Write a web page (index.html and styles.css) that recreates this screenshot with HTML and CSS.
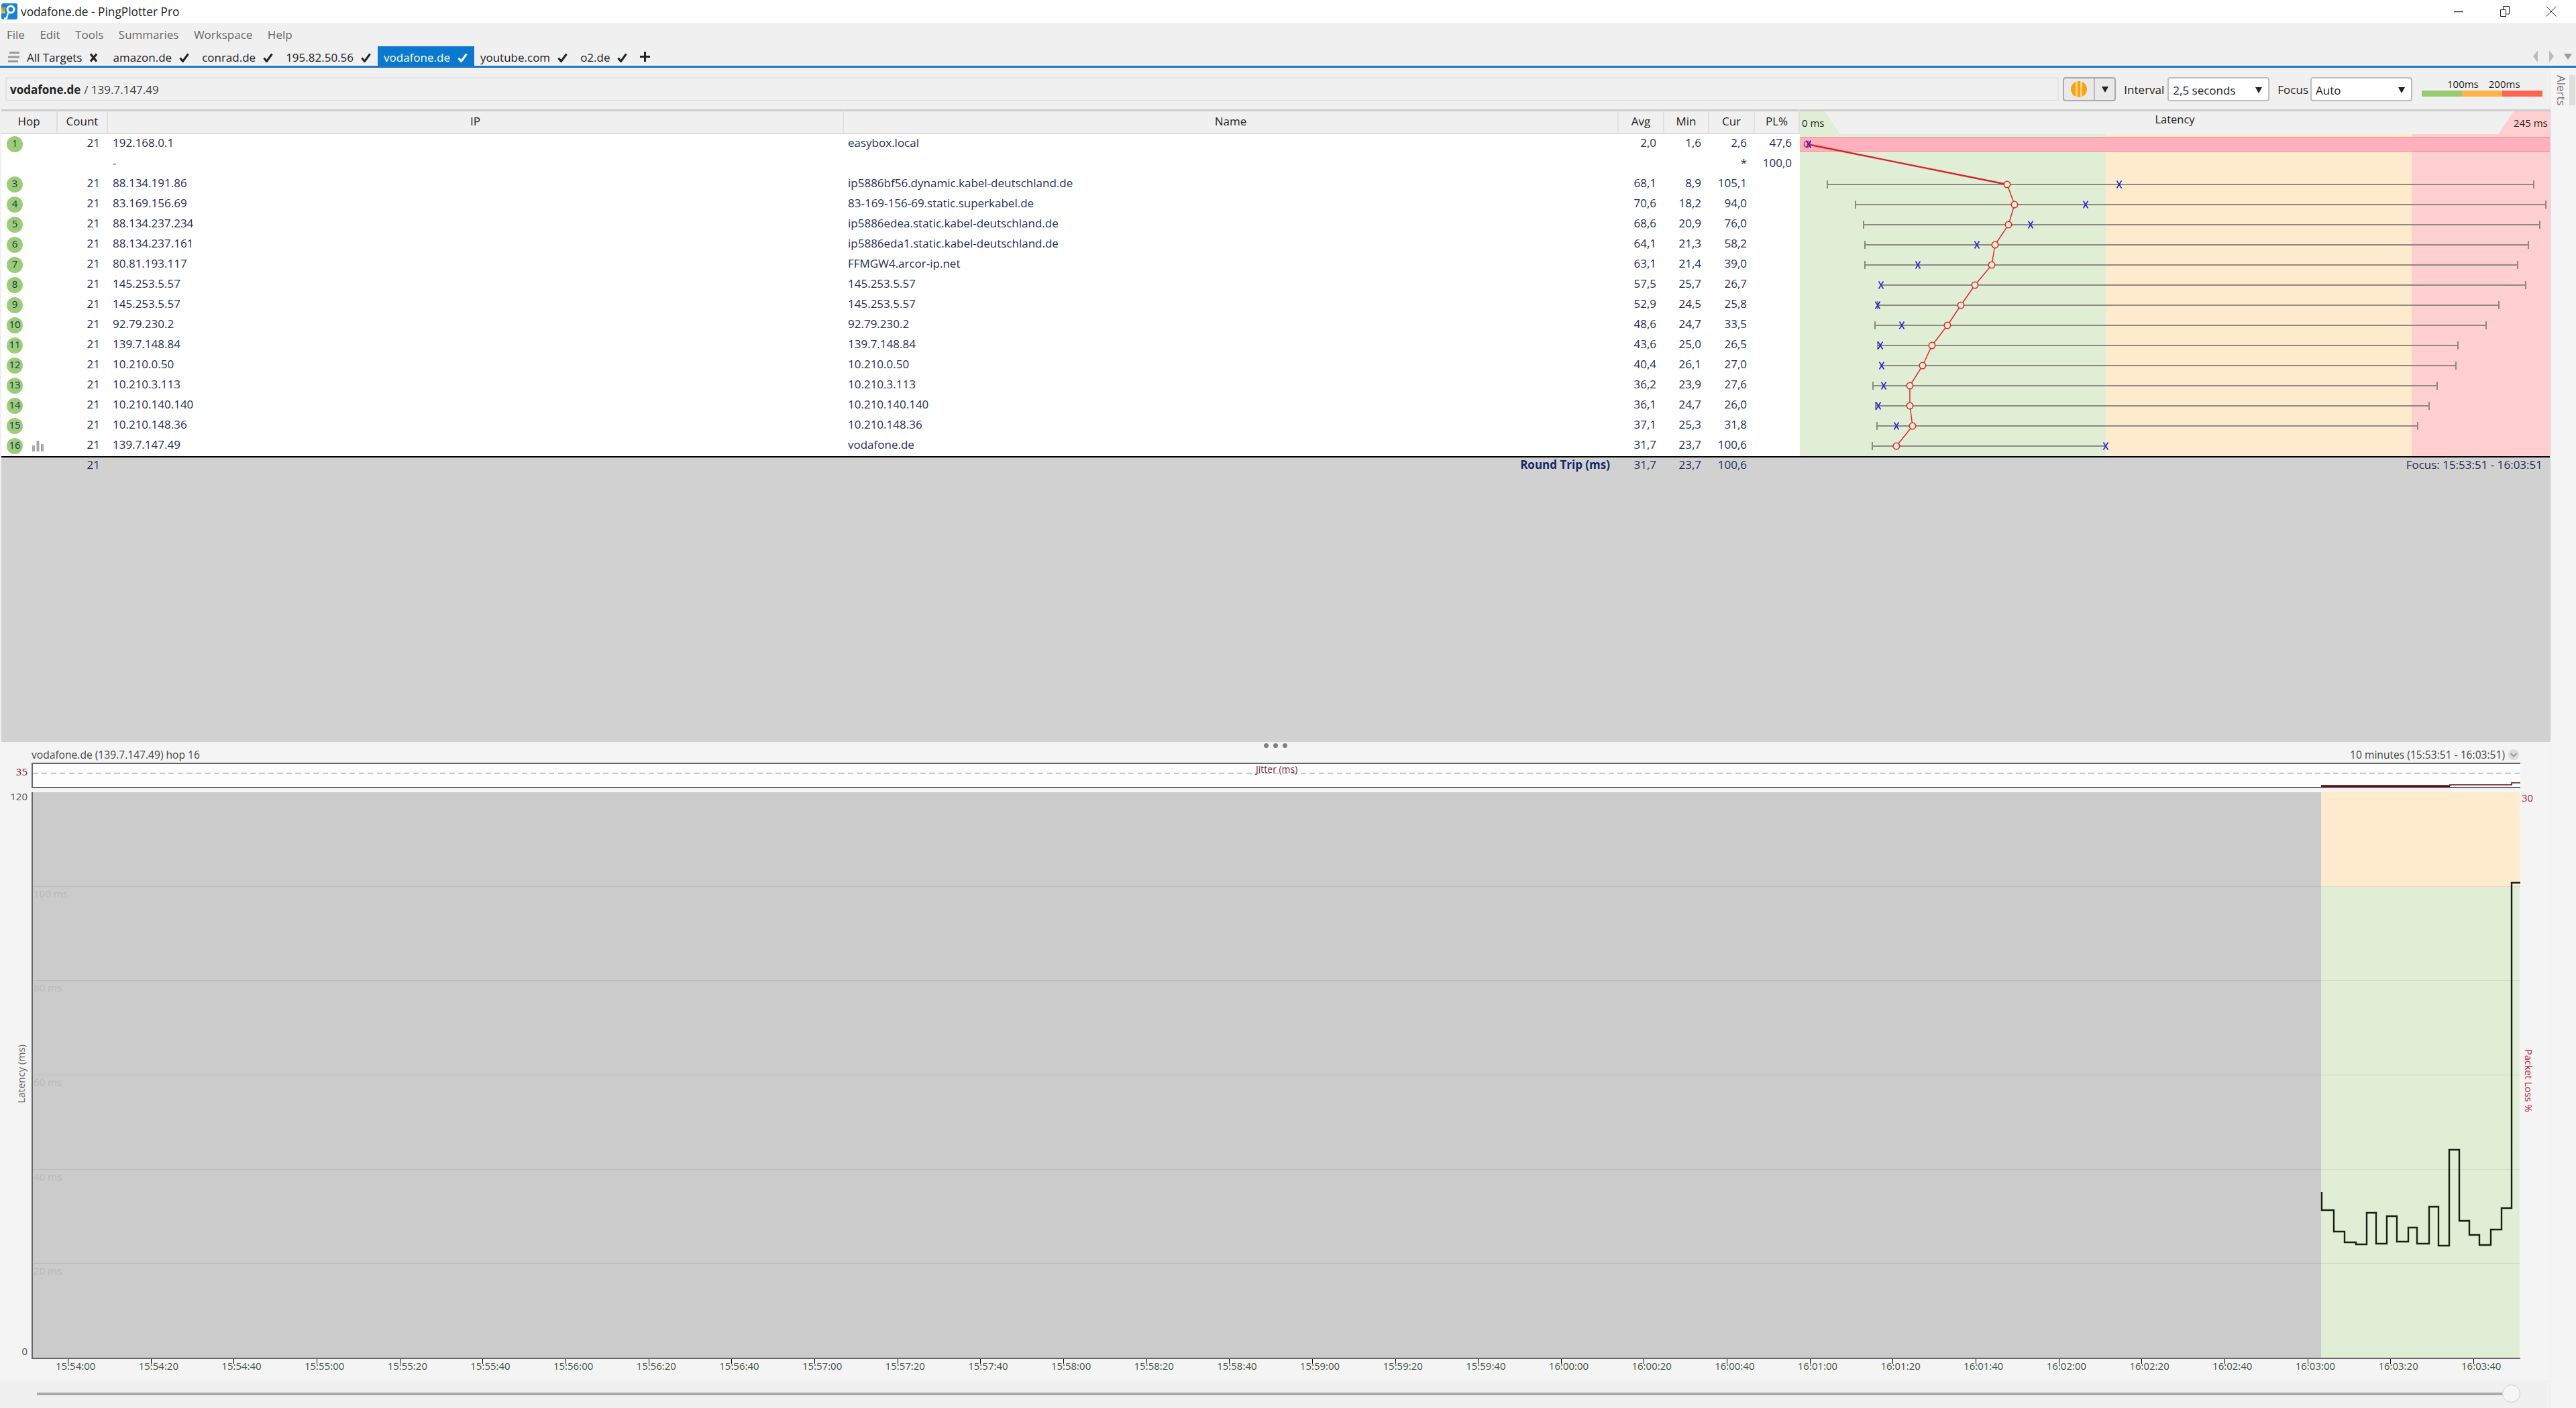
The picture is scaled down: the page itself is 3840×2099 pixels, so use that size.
FILE: index.html
```html
<!DOCTYPE html>
<html lang="en">
<head>
    <meta charset="UTF-8">
    <title>vodafone.de - PingPlotter Pro</title>
    <link rel="stylesheet" href="styles.css">
</head>
<body>
    <svg class="icon-defs" width="0" height="0">
        <symbol id="i-check" viewBox="0 0 15 14"><path d="M1.5 7.5 5.5 12.5 13.5 1.5" fill="none" stroke="currentColor" stroke-width="3"/></symbol>
        <symbol id="i-cross" viewBox="0 0 13 14"><path d="M2 1.5 11 12.5M11 1.5 2 12.5" fill="none" stroke="currentColor" stroke-width="3.2"/></symbol>
        <symbol id="i-cur" viewBox="-5 -6 10 12" overflow="visible"><path d="M-3.5 -5.5 3.5 5.5M3.5 -5.5 -3.5 5.5" fill="none" stroke="#2424d8" stroke-width="1.6"/></symbol>
    </svg>

    <header class="titlebar">
        <svg class="app-icon" viewBox="0 0 24 24" width="24" height="24">
            <rect width="24" height="24" rx="3" fill="#1583d6"/>
            <rect y="6" width="6" height="3" fill="#e8862e"/>
            <rect y="9" width="6" height="3" fill="#8dbb4c"/>
            <rect y="12" width="6" height="3" fill="#e0c33f"/>
            <circle cx="14" cy="9" r="5" fill="none" stroke="#fff" stroke-width="3"/>
            <path d="M10 14 8 22 4 23" fill="none" stroke="#fff" stroke-width="2.5"/>
        </svg>
        <span class="title-text">vodafone.de - PingPlotter Pro</span>
        <div class="window-controls">
            <svg viewBox="0 0 16 16" width="16" height="16"><path d="M1 8.5H15" stroke="#222" stroke-width="1.4"/></svg>
            <svg viewBox="0 0 16 16" width="16" height="16"><path d="M1.5 5.5H9.5V15.5H1.5ZM5.5 5V.5H14.5V12H10" fill="none" stroke="#222"/></svg>
            <svg viewBox="0 0 16 16" width="16" height="16"><path d="M.5 .5 15.5 15.5M15.5 .5 .5 15.5" stroke="#222"/></svg>
        </div>
    </header>

    <nav class="menubar">
        <span>File</span><span>Edit</span><span>Tools</span><span>Summaries</span><span>Workspace</span><span>Help</span>
    </nav>

    <div class="tabs">
        <svg class="tabs-menu" viewBox="0 0 17 16" width="17" height="16"><path d="M2 1.5H17M0 8H17M0 14.5H15" stroke="#999" stroke-width="3"/></svg>
        <div class="tab tab-all">All Targets <svg class="mark"><use href="#i-cross"/></svg></div>
        <div class="tab">amazon.de <svg class="mark"><use href="#i-check"/></svg></div>
        <div class="tab">conrad.de <svg class="mark"><use href="#i-check"/></svg></div>
        <div class="tab">195.82.50.56 <svg class="mark"><use href="#i-check"/></svg></div>
        <div class="tab active">vodafone.de <svg class="mark"><use href="#i-check"/></svg></div>
        <div class="tab">youtube.com <svg class="mark"><use href="#i-check"/></svg></div>
        <div class="tab">o2.de <svg class="mark"><use href="#i-check"/></svg></div>
        <div class="tab tab-add"><svg viewBox="0 0 15 15" width="15" height="15"><path d="M7.5 0V15M0 7.5H15" stroke="#222" stroke-width="3"/></svg></div>
        <div class="tab-nav">
            <svg viewBox="0 0 8 18" width="8" height="18"><path d="M7 0V18L0 9Z" fill="#bbb"/></svg>
            <svg viewBox="0 0 8 18" width="8" height="18"><path d="M1 0V18L8 9Z" fill="#bbb"/></svg>
            <svg viewBox="0 0 12 10" width="12" height="10"><path d="M0 1H12L6 10Z" fill="#999"/></svg>
        </div>
    </div>

    <div class="workspace">
        <main class="content">
            <section class="toolbar">
                <div class="target-box"><b>vodafone.de</b> / 139.7.147.49</div>
                <div class="pause-btn">
                    <span class="pause-main"><span class="pause-icon"></span></span>
                    <span class="pause-drop"><span class="arrow"></span></span>
                </div>
                <label class="tool-label">Interval</label>
                <div class="select">2,5 seconds<span class="arrow"></span></div>
                <label class="tool-label tool-focus">Focus</label>
                <div class="select">Auto<span class="arrow"></span></div>
                <div class="legend">
                    <div class="legend-labels"><span>100ms</span><span>200ms</span></div>
                    <div class="legend-bar"><i class="good"></i><i class="warn"></i><i class="bad"></i></div>
                </div>
            </section>

            <section class="hops">
                <table class="hop-table">
                    <colgroup>
                        <col class="c-hop"><col class="c-count"><col class="c-ip"><col class="c-name">
                        <col class="c-num"><col class="c-num2"><col class="c-num"><col class="c-num2">
                        <col class="c-graph">
                    </colgroup>
                    <thead>
                        <tr>
                            <th>Hop</th><th>Count</th><th>IP</th><th>Name</th>
                            <th>Avg</th><th>Min</th><th>Cur</th><th>PL%</th>
                            <th class="th-graph">
                                <span class="scale scale-min">0 ms</span>
                                Latency
                                <span class="scale scale-max">245 ms</span>
                            </th>
                        </tr>
                    </thead>
                    <tbody>
                        <tr>
                            <td class="hop"><span class="pill">1</span></td><td class="num">21</td><td class="ip">192.168.0.1</td><td class="name">easybox.local</td>
                            <td class="num">2,0</td><td class="num">1,6</td><td class="num">2,6</td><td class="num">47,6</td>
                            <td class="graph" rowspan="16">
                                <svg class="trace" viewBox="0 0 1118 480" width="1118" height="480">
                                    <rect width="456" height="480" fill="#dfeed5"/>
                                    <rect x="456" width="456" height="480" fill="#feebcd"/>
                                    <rect x="912" width="206" height="480" fill="#ffcfcf"/>
                                    <rect y="4" width="1118" height="22" fill="#ffb0bc"/>
                                    <path d="M0 4.5H1118M0 25.5H1118" stroke="#ec8f8f"/>
                                    <path d="M41 75H1094M41 69V81M1094 69V81
                                             M83 105H1112M83 99V111M1112 99V111
                                             M95 135H1103M95 129V141M1103 129V141
                                             M97 165H1086M97 159V171M1086 159V171
                                             M97 195H1070M97 189V201M1070 189V201
                                             M121 225H1082M1082 219V231
                                             M116 255H1042M116 249V261M1042 249V261
                                             M112 285H1023M112 279V291M1023 279V291
                                             M116 315H981M116 309V321M981 309V321
                                             M120 345H978M978 339V351
                                             M109 375H950M109 369V381M950 369V381
                                             M113 405H938M113 399V411M938 399V411
                                             M115 435H921M115 429V441M921 429V441
                                             M108 465H456M108 459V471"
                                          fill="none" stroke="#8b8b80" stroke-width="2"/>
                                    <path d="M11 15 309 75" fill="none" stroke="#d92228" stroke-width="2.4"/>
                                    <polyline points="309,75 320,105 311,135 291,165 286,195 261,225 240,255 220,285 197,315 183,345 164,375 164,405 168,435 144,465" fill="none" stroke="#e4262c" stroke-width="1.5"/>
                                    <g fill="#dfeed5" stroke="#e4262c" stroke-width="1.6">
                                        <circle cx="11" cy="15" r="4.5" fill="none"/>
                                        <circle cx="309" cy="75" r="4.7"/><circle cx="320" cy="105" r="4.7"/><circle cx="311" cy="135" r="4.7"/>
                                        <circle cx="291" cy="165" r="4.7"/><circle cx="286" cy="195" r="4.7"/><circle cx="261" cy="225" r="4.7"/>
                                        <circle cx="240" cy="255" r="4.7"/><circle cx="220" cy="285" r="4.7"/><circle cx="197" cy="315" r="4.7"/>
                                        <circle cx="183" cy="345" r="4.7"/><circle cx="164" cy="375" r="4.7"/><circle cx="164" cy="405" r="4.7"/>
                                        <circle cx="168" cy="435" r="4.7"/><circle cx="144" cy="465" r="4.7"/>
                                    </g>
                                    <g>
                                        <use href="#i-cur" x="8" y="9" width="10" height="12"/><use href="#i-cur" x="471" y="69" width="10" height="12"/>
                                        <use href="#i-cur" x="421" y="99" width="10" height="12"/><use href="#i-cur" x="339" y="129" width="10" height="12"/>
                                        <use href="#i-cur" x="259" y="159" width="10" height="12"/><use href="#i-cur" x="171" y="189" width="10" height="12"/>
                                        <use href="#i-cur" x="116" y="219" width="10" height="12"/><use href="#i-cur" x="111" y="249" width="10" height="12"/>
                                        <use href="#i-cur" x="147" y="279" width="10" height="12"/><use href="#i-cur" x="115" y="309" width="10" height="12"/>
                                        <use href="#i-cur" x="117" y="339" width="10" height="12"/><use href="#i-cur" x="120" y="369" width="10" height="12"/>
                                        <use href="#i-cur" x="112" y="399" width="10" height="12"/><use href="#i-cur" x="139" y="429" width="10" height="12"/>
                                        <use href="#i-cur" x="451" y="459" width="10" height="12"/>
                                    </g>
                                </svg>
                            </td>
                        </tr>
                        <tr>
                            <td class="hop"></td><td class="num"></td><td class="ip">-</td><td class="name"></td>
                            <td class="num"></td><td class="num"></td><td class="num">*</td><td class="num">100,0</td>
                        </tr>
                        <tr>
                            <td class="hop"><span class="pill">3</span></td><td class="num">21</td><td class="ip">88.134.191.86</td><td class="name">ip5886bf56.dynamic.kabel-deutschland.de</td>
                            <td class="num">68,1</td><td class="num">8,9</td><td class="num">105,1</td><td class="num"></td>
                        </tr>
                        <tr>
                            <td class="hop"><span class="pill">4</span></td><td class="num">21</td><td class="ip">83.169.156.69</td><td class="name">83-169-156-69.static.superkabel.de</td>
                            <td class="num">70,6</td><td class="num">18,2</td><td class="num">94,0</td><td class="num"></td>
                        </tr>
                        <tr>
                            <td class="hop"><span class="pill">5</span></td><td class="num">21</td><td class="ip">88.134.237.234</td><td class="name">ip5886edea.static.kabel-deutschland.de</td>
                            <td class="num">68,6</td><td class="num">20,9</td><td class="num">76,0</td><td class="num"></td>
                        </tr>
                        <tr>
                            <td class="hop"><span class="pill">6</span></td><td class="num">21</td><td class="ip">88.134.237.161</td><td class="name">ip5886eda1.static.kabel-deutschland.de</td>
                            <td class="num">64,1</td><td class="num">21,3</td><td class="num">58,2</td><td class="num"></td>
                        </tr>
                        <tr>
                            <td class="hop"><span class="pill">7</span></td><td class="num">21</td><td class="ip">80.81.193.117</td><td class="name">FFMGW4.arcor-ip.net</td>
                            <td class="num">63,1</td><td class="num">21,4</td><td class="num">39,0</td><td class="num"></td>
                        </tr>
                        <tr>
                            <td class="hop"><span class="pill">8</span></td><td class="num">21</td><td class="ip">145.253.5.57</td><td class="name">145.253.5.57</td>
                            <td class="num">57,5</td><td class="num">25,7</td><td class="num">26,7</td><td class="num"></td>
                        </tr>
                        <tr>
                            <td class="hop"><span class="pill">9</span></td><td class="num">21</td><td class="ip">145.253.5.57</td><td class="name">145.253.5.57</td>
                            <td class="num">52,9</td><td class="num">24,5</td><td class="num">25,8</td><td class="num"></td>
                        </tr>
                        <tr>
                            <td class="hop"><span class="pill">10</span></td><td class="num">21</td><td class="ip">92.79.230.2</td><td class="name">92.79.230.2</td>
                            <td class="num">48,6</td><td class="num">24,7</td><td class="num">33,5</td><td class="num"></td>
                        </tr>
                        <tr>
                            <td class="hop"><span class="pill">11</span></td><td class="num">21</td><td class="ip">139.7.148.84</td><td class="name">139.7.148.84</td>
                            <td class="num">43,6</td><td class="num">25,0</td><td class="num">26,5</td><td class="num"></td>
                        </tr>
                        <tr>
                            <td class="hop"><span class="pill">12</span></td><td class="num">21</td><td class="ip">10.210.0.50</td><td class="name">10.210.0.50</td>
                            <td class="num">40,4</td><td class="num">26,1</td><td class="num">27,0</td><td class="num"></td>
                        </tr>
                        <tr>
                            <td class="hop"><span class="pill">13</span></td><td class="num">21</td><td class="ip">10.210.3.113</td><td class="name">10.210.3.113</td>
                            <td class="num">36,2</td><td class="num">23,9</td><td class="num">27,6</td><td class="num"></td>
                        </tr>
                        <tr>
                            <td class="hop"><span class="pill">14</span></td><td class="num">21</td><td class="ip">10.210.140.140</td><td class="name">10.210.140.140</td>
                            <td class="num">36,1</td><td class="num">24,7</td><td class="num">26,0</td><td class="num"></td>
                        </tr>
                        <tr>
                            <td class="hop"><span class="pill">15</span></td><td class="num">21</td><td class="ip">10.210.148.36</td><td class="name">10.210.148.36</td>
                            <td class="num">37,1</td><td class="num">25,3</td><td class="num">31,8</td><td class="num"></td>
                        </tr>
                        <tr>
                            <td class="hop">
                                <span class="pill">16</span>
                                <svg class="bars" viewBox="0 0 17 16" width="17" height="16"><path d="M0 7H4V16H0ZM6.5 0H10.5V16H6.5ZM13 5H17V16H13Z" fill="#a9a9a9"/></svg>
                            </td>
                            <td class="num">21</td><td class="ip">139.7.147.49</td><td class="name">vodafone.de</td>
                            <td class="num">31,7</td><td class="num">23,7</td><td class="num">100,6</td><td class="num"></td>
                        </tr>
                    </tbody>
                    <tfoot>
                        <tr>
                            <td></td><td class="num">21</td><td></td><td class="round-trip">Round Trip (ms)</td>
                            <td class="num">31,7</td><td class="num">23,7</td><td class="num">100,6</td><td></td>
                            <td class="focus-range">Focus: 15:53:51 - 16:03:51</td>
                        </tr>
                    </tfoot>
                </table>
            </section>

            <section class="graph-panel">
                <div class="splitter"><i></i><i></i><i></i></div>
                <div class="graph-head">
                    <span>vodafone.de (139.7.147.49) hop 16</span>
                    <span class="graph-range">10 minutes (15:53:51 - 16:03:51)
                        <svg viewBox="0 0 16 16" width="16" height="16"><circle cx="8" cy="8" r="8" fill="#dcdcdc"/><path d="M3.5 6 8 10.5 12.5 6" fill="none" stroke="#999" stroke-width="2"/></svg>
                    </span>
                </div>
                <div class="chart">
                    <div class="jitter-label">35</div>
                    <div class="jitter">
                        <span class="jitter-title">Jitter (ms)</span>
                        <svg class="overlay" viewBox="0 0 3708 34" width="3708" height="34">
                            <path d="M3411 33H3603" stroke="#5a1216" stroke-width="3.5"/>
                            <path d="M3603 33V31H3695V28H3708" fill="none" stroke="#5a1216" stroke-width="1.6"/>
                        </svg>
                    </div>
                    <div></div>

                    <div class="y-axis">
                        <span>120</span>
                        <span class="y-title">Latency (ms)</span>
                        <span>0</span>
                    </div>
                    <div class="plot">
                        <div class="plot-idle"></div>
                        <div class="plot-live">
                            <div class="zone-warn"></div>
                            <div class="zone-good"></div>
                        </div>
                        <div class="grid-lines">
                            <div></div>
                            <div><span>100 ms</span></div>
                            <div><span>80 ms</span></div>
                            <div><span>60 ms</span></div>
                            <div><span>40 ms</span></div>
                            <div><span>20 ms</span></div>
                        </div>
                        <svg class="overlay" viewBox="0 0 3708 843" width="3708" height="843">
                            <path d="M3412 596V623H3430V655H3446V671H3463V674H3479V627H3493V673H3509V632H3524V670H3541V649H3554V673H3572V618H3586V676H3602V533H3617V639H3632V660H3647V675H3664V652H3680V620H3695V135H3708"
                                  fill="none" stroke="#1a1f14" stroke-width="2.4"/>
                        </svg>
                    </div>
                    <div class="y-axis-right">
                        <span>30</span>
                        <span class="y-title-right">Packet Loss %</span>
                        <span></span>
                    </div>

                    <div></div>
                    <div class="time-axis">
                        <span>15:54:00</span><span>15:54:20</span><span>15:54:40</span><span>15:55:00</span><span>15:55:20</span><span>15:55:40</span>
                        <span>15:56:00</span><span>15:56:20</span><span>15:56:40</span><span>15:57:00</span><span>15:57:20</span><span>15:57:40</span>
                        <span>15:58:00</span><span>15:58:20</span><span>15:58:40</span><span>15:59:00</span><span>15:59:20</span><span>15:59:40</span>
                        <span>16:00:00</span><span>16:00:20</span><span>16:00:40</span><span>16:01:00</span><span>16:01:20</span><span>16:01:40</span>
                        <span>16:02:00</span><span>16:02:20</span><span>16:02:40</span><span>16:03:00</span><span>16:03:20</span><span>16:03:40</span>
                    </div>
                </div>
            </section>

            <section class="slider">
                <div class="slider-track"></div>
                <div class="slider-knob"></div>
            </section>
        </main>

        <aside class="alerts">
            <span class="alerts-label">Alerts</span>
            <span class="alerts-thumb"></span>
        </aside>
    </div>
</body>
</html>
```

FILE: styles.css
```css
* {
    margin: 0;
    padding: 0;
    box-sizing: border-box;
}

body {
    width: 3840px;
    height: 2099px;
    display: flex;
    flex-direction: column;
    overflow: hidden;
    background: #f4f4f4;
    color: #333;
    font-family: "Open Sans", "Noto Sans", sans-serif;
    font-size: 16px;
}

.icon-defs {
    position: absolute;
}

/* title bar */
.titlebar {
    height: 34px;
    flex: none;
    display: flex;
    align-items: center;
    padding-left: 2px;
    background: white;
    color: #222;
    font-size: 17.3px;
}

.title-text {
    margin-left: 5px;
}

.window-controls {
    margin-left: auto;
    padding-right: 29px;
    display: flex;
    gap: 53px;
}

/* menu */
.menubar {
    height: 35px;
    flex: none;
    display: flex;
    align-items: center;
    gap: 22.5px;
    padding-left: 10px;
    background: #f0f0f0;
    color: #666;
    font-size: 17px;
}

/* tabs */
.tabs {
    height: 32px;
    flex: none;
    display: flex;
    padding-left: 12px;
    background: #f0f0f0;
    border-bottom: 3px solid #1d77bd;
    color: #222;
    font-size: 17px;
}

.tabs-menu {
    align-self: center;
    margin-top: 3px;
    margin-right: 2px;
}

.tab {
    display: flex;
    align-items: center;
    gap: 11px;
    padding: 4px 10px 0 9px;
}

.tab.active {
    background: #0b78d0;
    color: white;
}

.mark {
    width: 15px;
    height: 14px;
}

.tab-all {
    padding-right: 13px;
}

.tab-all .mark {
    width: 13px;
}

.tab-add {
    padding-top: 1px;
}

.tab-nav {
    margin-left: auto;
    padding-right: 6px;
    display: flex;
    align-items: center;
    gap: 15px;
}

/* main area */
.workspace {
    flex: 1;
    display: flex;
    min-height: 0;
}

.content {
    width: 3802px;
    display: flex;
    flex-direction: column;
    background: #f0f0f0;
}

/* toolbar */
.toolbar {
    height: 62px;
    flex: none;
    display: flex;
    padding: 14px 12px 12px 8px;
    background: #f0f0f0;
    color: #222;
}

.target-box {
    flex: 1;
    display: flex;
    align-items: center;
    gap: 5px;
    padding-left: 5px;
    border: 2px solid #e3e3e3;
    border-radius: 2px;
    color: #444;
    font-size: 17px;
}

.target-box b {
    color: #222;
}

.pause-btn {
    width: 79px;
    margin-left: 6px;
    display: flex;
    border: 2px solid #aaa;
    border-radius: 4px;
    background: #e9e9e9;
}

.pause-main {
    width: 46px;
    display: flex;
    align-items: center;
    justify-content: center;
    border-right: 2px solid #bbb;
}

.pause-icon {
    width: 24px;
    height: 24px;
    border-radius: 50%;
    background: linear-gradient(90deg, transparent 7px, #fbd48a 7px, #fbd48a 10px, transparent 10px, transparent 14px, #fbd48a 14px, #fbd48a 17px, transparent 17px), #f5a30f;
}

.pause-drop {
    flex: 1;
    display: flex;
    align-items: center;
    justify-content: center;
}

.arrow {
    width: 0;
    height: 0;
    border-left: 5px solid transparent;
    border-right: 5px solid transparent;
    border-top: 9px solid #222;
}

.tool-label {
    align-self: center;
    margin-left: 12px;
    margin-right: 5px;
    font-size: 17px;
}

.tool-focus {
    margin-right: 3px;
}

.select {
    width: 152px;
    display: flex;
    align-items: center;
    justify-content: space-between;
    padding: 2px 9px 0 6px;
    border: 2px solid #bdbdbd;
    border-radius: 4px;
    background: white;
    font-size: 17px;
}

.legend {
    width: 180px;
    margin-left: 14px;
    display: flex;
    flex-direction: column;
    justify-content: flex-end;
    font-size: 15px;
    line-height: 20px;
}

.legend-labels {
    display: flex;
    gap: 15px;
    padding-left: 38px;
}

.legend-bar {
    height: 9px;
    display: flex;
    margin-bottom: 7px;
}

.legend-bar i {
    flex: 1;
}

.good { background: #97cb72; }
.warn { background: #fdb34a; }
.bad { background: #fb6650; }

/* hop table */
.hops {
    flex: 1;
    margin-left: 2px;
    background: #d1d1d1;
    min-height: 0;
    overflow: hidden;
}

.hop-table {
    width: 3799px;
    table-layout: fixed;
    border-collapse: separate;
    border-spacing: 0;
    font-size: 17px;
}

.c-hop { width: 84px; }
.c-count { width: 75px; }
.c-ip { width: 1097px; }
.c-name { width: 1155px; }
.c-num { width: 68px; }
.c-num2 { width: 67px; }
.c-graph { width: 1118px; }

.hop-table th {
    height: 34px;
    padding-bottom: 4px;
    background: #f0f0f0;
    border-top: 3px solid #cdcdcd;
    border-right: 2px solid #e0e0e0;
    border-bottom: 2px solid #dcdcdc;
    color: #222;
    font-size: 17px;
    font-weight: 400;
}

.hop-table .th-graph {
    position: relative;
    padding-bottom: 11px;
    border-right: 0;
    border-bottom: 0;
    overflow: hidden;
    font-size: 16.5px;
}

.scale {
    position: absolute;
    top: 0;
    bottom: 0;
    display: flex;
    align-items: flex-end;
    padding-bottom: 7px;
    font-size: 15px;
}

.scale-min {
    left: 0;
    width: 60px;
    padding-left: 3px;
    background: #dfeed5;
    clip-path: polygon(0 0, 37px 0, 100% 100%, 0 100%);
}

.scale-max {
    right: 0;
    width: 77px;
    padding-left: 23px;
    background: #ffcfcf;
    clip-path: polygon(23px 0, 100% 0, 100% 100%, 0 100%);
}

.hop-table tbody tr {
    height: 30px;
    background: white;
}

.hop-table td {
    height: 30px;
    padding-bottom: 4px;
    color: #1f2d58;
    line-height: 22px;
    vertical-align: middle;
    white-space: nowrap;
}

.hop-table .hop {
    padding-left: 8px;
    padding-bottom: 0;
}

.pill {
    display: inline-block;
    min-width: 24px;
    height: 24px;
    padding: 0 3px;
    border-radius: 12px;
    background: #9bcd78;
    font-size: 15px;
    line-height: 21px;
    text-align: center;
    vertical-align: middle;
}

.bars {
    margin-left: 10px;
    vertical-align: middle;
}

.num {
    padding-right: 12px;
    text-align: right;
}

.ip {
    padding-left: 7px;
}

.name {
    padding-left: 6px;
}

.hop-table .graph {
    padding: 0;
    vertical-align: top;
    height: 480px;
}

.trace {
    display: block;
}

.hop-table tfoot td {
    border-top: 2px solid black;
    height: 24px;
    padding-bottom: 0;
    line-height: 22px;
    vertical-align: top;
}

.hop-table .round-trip {
    padding-right: 13px;
    text-align: right;
    color: #14276b;
    font-weight: 700;
}

.hop-table .focus-range {
    padding-right: 11px;
    text-align: right;
}

/* lower graph */
.graph-panel {
    height: 951px;
    flex: none;
    position: relative;
    background: #f4f4f4;
}

.splitter {
    position: absolute;
    top: 2px;
    left: 1884px;
    display: flex;
    gap: 7px;
}

.splitter i {
    width: 7px;
    height: 7px;
    border-radius: 50%;
    background: #808080;
}

.graph-head {
    height: 31px;
    display: flex;
    justify-content: space-between;
    align-items: center;
    padding: 7px 47px 0 47px;
    color: #444;
    font-size: 15.6px;
}

.graph-range {
    display: flex;
    align-items: center;
    gap: 5px;
}

.chart {
    display: grid;
    grid-template-columns: 47px 3710px 45px;
    grid-template-rows: 38px 851px 31px;
    font-size: 15px;
}

.jitter-label {
    padding-right: 6px;
    text-align: right;
    color: #7a1c28;
    line-height: 26px;
}

.jitter {
    position: relative;
    height: 38px;
    border-top: 2px solid #666;
    border-bottom: 2px solid #666;
    border-left: 2px solid #666;
    background:
        repeating-linear-gradient(90deg, #777 0, #777 8px, transparent 8px, transparent 13.5px) 0 13px / 100% 1px no-repeat,
        #fdfdfd;
}

.jitter-title {
    position: absolute;
    top: -2px;
    left: 1818px;
    padding: 0 5px;
    color: #7a2a34;
    font-size: 14px;
    line-height: 20px;
}

.overlay {
    position: absolute;
    top: 0;
    left: 0;
}

.y-axis {
    margin-top: 2px;
    display: flex;
    flex-direction: column;
    justify-content: space-between;
    align-items: flex-end;
    padding: 0 6px 2px 0;
    color: #555;
    line-height: 20px;
}

.y-title {
    writing-mode: vertical-rl;
    transform: rotate(180deg);
    color: #666;
}

.plot {
    position: relative;
    margin-top: 6px;
    display: flex;
    border-left: 2px solid #666;
    border-bottom: 2px solid #666;
}

.plot-idle {
    width: 3411px;
    background: #cbcbcb;
}

.plot-live {
    width: 296px;
    display: flex;
    flex-direction: column;
}

.zone-warn {
    height: 141px;
    background: #feebcd;
}

.zone-good {
    flex: 1;
    background: #dfeed5;
}

.grid-lines {
    position: absolute;
    top: 0;
    left: 0;
    width: 3708px;
    height: 843px;
    display: flex;
    flex-direction: column;
}

.grid-lines div {
    flex: 1;
    padding-left: 1px;
    border-top: 1px solid rgba(0, 0, 0, 0.07);
    color: #b8b8b8;
    font-size: 15px;
    line-height: 20px;
}

.grid-lines div:first-child {
    border-top: 0;
}

.y-axis-right {
    margin-top: 6px;
    display: flex;
    flex-direction: column;
    justify-content: space-between;
    padding-left: 2px;
    color: #c2173a;
    line-height: 16px;
}

.y-title-right {
    writing-mode: vertical-rl;
    font-size: 14.5px;
    align-self: flex-start;
    margin-left: 2px;
}

.time-axis {
    display: flex;
    padding-left: 54px;
    color: #445046;
    font-size: 15px;
}

.time-axis span {
    position: relative;
    width: 123.66px;
    flex: none;
    text-indent: -18px;
    line-height: 20px;
}

.time-axis span::before {
    content: "";
    position: absolute;
    top: 0;
    left: 0;
    width: 1px;
    height: 7px;
    background: black;
}

/* bottom slider */
.slider {
    height: 42px;
    flex: none;
    display: flex;
    align-items: center;
    padding: 0 45px 0 55px;
    background: #f0f0f0;
}

.slider-track {
    flex: 1;
    height: 4px;
    background: #aaa;
}

.slider-knob {
    width: 27px;
    height: 27px;
    margin-bottom: 2px;
    border: 1px solid #ccc;
    border-radius: 50%;
    background: #f5f5f5;
}

/* right strip */
.alerts {
    flex: 1;
    display: flex;
    align-items: flex-start;
    padding-top: 11px;
    padding-left: 5px;
    background: #f4f4f4;
    border-left: 1px solid #eee;
}

.alerts-label {
    writing-mode: vertical-rl;
    color: #777;
    font-size: 17px;
    line-height: 20px;
}

.alerts-thumb {
    width: 9px;
    height: 45px;
    margin-left: 2px;
    background: #dedede;
}
```
